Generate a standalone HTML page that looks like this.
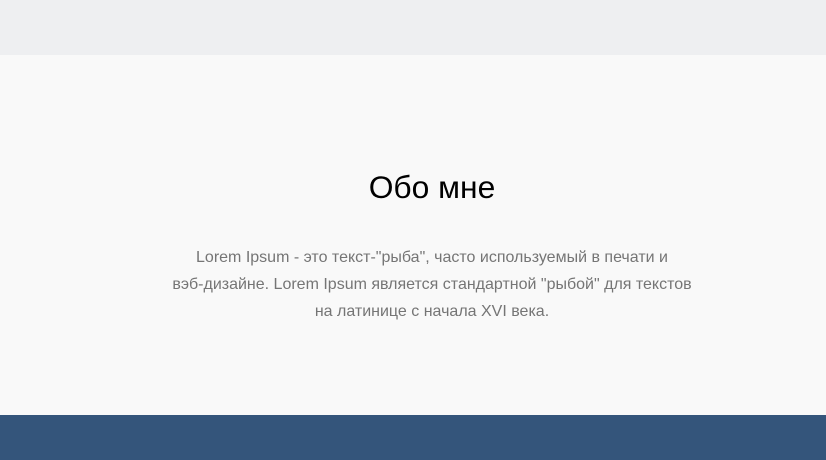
<!DOCTYPE html>
<html><head><meta charset="utf-8"><style>
html,body{margin:0;padding:0;width:826px;height:460px;overflow:hidden;font-family:"Liberation Sans",sans-serif}
.top{height:55px;background:#eeeff1}
.main{height:360px;background:#f9f9f9;text-align:center;position:relative}
h1{position:absolute;left:38px;right:0;top:112px;margin:0;font-weight:400;font-size:31.8px;line-height:40px;color:#000}
p{position:absolute;left:38px;right:0;top:189px;margin:0;font-size:16px;line-height:27px;color:#757575;white-space:nowrap}
.bot{height:45px;background:#34557b}
</style></head><body>
<div class="top"></div>
<div class="main">
<h1>Обо мне</h1>
<p>Lorem Ipsum - это текст-"рыба", часто используемый в печати и<br>вэб-дизайне. Lorem Ipsum является стандартной "рыбой" для текстов<br>на латинице с начала XVI века.</p>
</div>
<div class="bot"></div>
</body></html>
